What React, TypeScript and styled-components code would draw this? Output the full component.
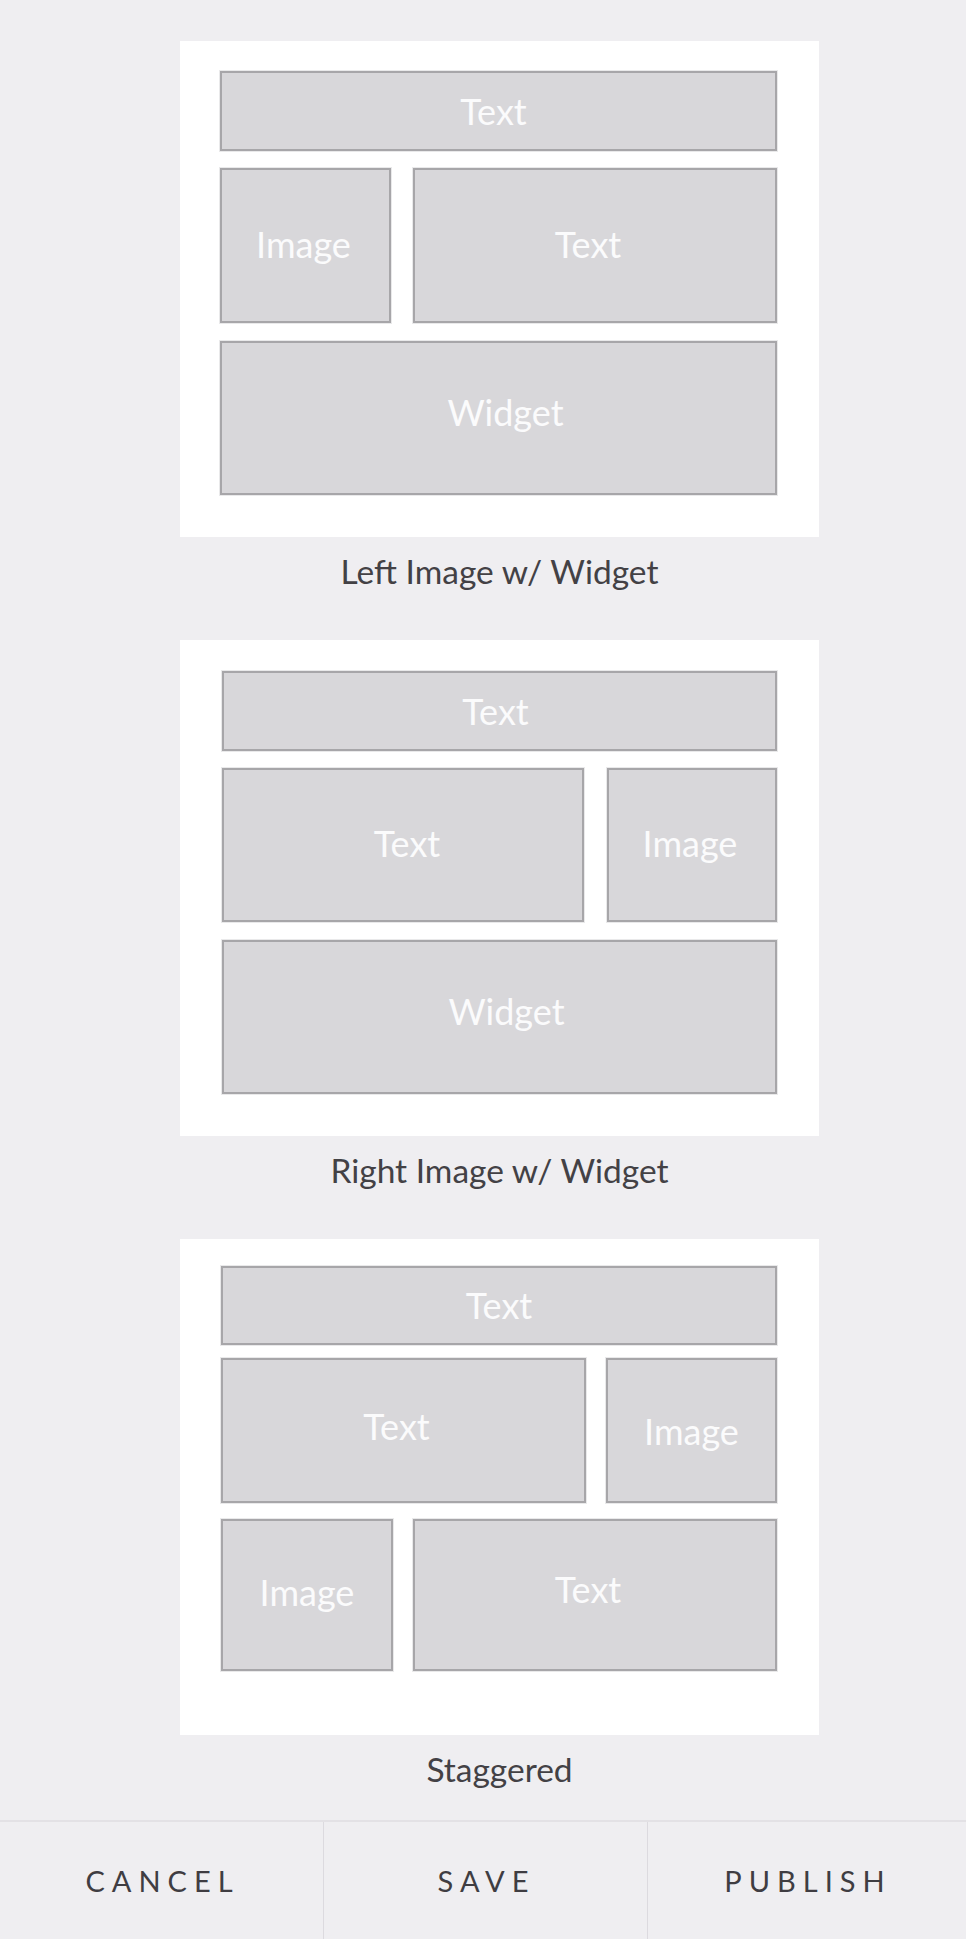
import React from "react";
import styled, { createGlobalStyle } from "styled-components";

const GlobalStyle = createGlobalStyle`
  html, body {
    margin: 0;
    padding: 0;
    background: #efeef1;
  }
  body {
    font-family: Lato, "Open Sans", "Liberation Sans", sans-serif;
    -webkit-font-smoothing: antialiased;
  }
  * { box-sizing: border-box; }
`;

const Page = styled.div`
  width: 966px;
  min-height: 1939px;
  display: flex;
  flex-direction: column;
  background: #efeef1;
`;

const List = styled.div`
  display: flex;
  flex-direction: column;
  gap: 49px;
  padding: 41px 0 31px 180px;
`;

const Option = styled.div`
  width: 639px;
  display: flex;
  flex-direction: column;
  align-items: center;
`;

const Card = styled.div<{ $pad: string; $gap: string }>`
  width: 639px;
  height: 496px;
  background: #ffffff;
  padding: ${(p) => p.$pad};
  display: flex;
  flex-direction: column;
  gap: ${(p) => p.$gap};
`;

const Row = styled.div<{ $cols: string; $h: number; $gap?: number; $mt?: number }>`
  display: grid;
  grid-template-columns: ${(p) => p.$cols};
  column-gap: ${(p) => p.$gap ?? 22}px;
  height: ${(p) => p.$h}px;
  margin-top: ${(p) => p.$mt ?? 0}px;
`;

const Block = styled.div<{ $shift?: number; $dx?: number }>`
  background: #d8d7da;
  border: 2px solid #a7a6a9;
  box-shadow: 0 0 0 1px rgba(169, 168, 171, 0.25);
  display: flex;
  align-items: center;
  justify-content: center;
  color: #fbfbfc;
  font-family: Lato, "Open Sans", "Liberation Sans", sans-serif;
  font-size: 36px;
  line-height: 1;
  padding-bottom: ${(p) => p.$shift ?? 0}px;
  padding-right: ${(p) => Math.max(0, p.$dx ?? 0)}px;
  padding-left: ${(p) => Math.max(0, -(p.$dx ?? 0))}px;
`;

const Caption = styled.div`
  margin-top: 14px;
  height: 40px;
  line-height: 40px;
  font-size: 33.5px;
  color: #434145;
  text-align: center;
  white-space: nowrap;
`;

const Footer = styled.div`
  margin-top: auto;
  height: 119px;
  border-top: 2px solid #e3e1e5;
  display: grid;
  grid-template-columns: 323px 324px 1fr;
  background: #efeef1;
`;

const FooterButton = styled.button<{ $divider?: boolean }>`
  appearance: none;
  background: transparent;
  border: none;
  border-left: ${(p) => (p.$divider ? "1px solid #dcdadf" : "none")};
  margin: 0;
  padding: 0 0 0 2px;
  font-family: Lato, "Open Sans", "Liberation Sans", sans-serif;
  font-size: 29px;
  font-weight: 400;
  letter-spacing: 7px;
  color: #3f3d42;
  display: flex;
  align-items: center;
  justify-content: center;
  cursor: pointer;
`;

export default function App() {
  return (
    <>
      <GlobalStyle />
      <Page>
        <List>
          <Option>
            <Card $pad="30px 42px 0 40px" $gap="17px">
              <Row $cols="1fr" $h={80}>
                <Block $dx={10}>Text</Block>
              </Row>
              <Row $cols="171px 1fr" $h={155}>
                <Block $shift={4} $dx={4}>Image</Block>
                <Block $shift={4} $dx={14}>Text</Block>
              </Row>
              <Row $cols="1fr" $h={154} $mt={1}>
                <Block $shift={12} $dx={-14}>Widget</Block>
              </Row>
            </Card>
            <Caption>Left Image w/ Widget</Caption>
          </Option>

          <Option>
            <Card $pad="31px 42px 0 42px" $gap="17px">
              <Row $cols="1fr" $h={80}>
                <Block $dx={8}>Text</Block>
              </Row>
              <Row $cols="1fr 170px" $h={154} $gap={23}>
                <Block $shift={4} $dx={-8}>Text</Block>
                <Block $shift={4} $dx={4}>Image</Block>
              </Row>
              <Row $cols="1fr" $h={154} $mt={1}>
                <Block $shift={12} $dx={-14}>Widget</Block>
              </Row>
            </Card>
            <Caption>Right Image w/ Widget</Caption>
          </Option>

          <Option>
            <Card $pad="27px 42px 0 41px" $gap="13px">
              <Row $cols="1fr" $h={79}>
                <Block $shift={2}>Text</Block>
              </Row>
              <Row $cols="1fr 171px" $h={145} $gap={20}>
                <Block $shift={10} $dx={14}>Text</Block>
                <Block>Image</Block>
              </Row>
              <Row $cols="172px 1fr" $h={152} $gap={20} $mt={3}>
                <Block $shift={6}>Image</Block>
                <Block $shift={12} $dx={14}>Text</Block>
              </Row>
            </Card>
            <Caption>Staggered</Caption>
          </Option>
        </List>

        <Footer>
          <FooterButton>CANCEL</FooterButton>
          <FooterButton $divider>SAVE</FooterButton>
          <FooterButton $divider>PUBLISH</FooterButton>
        </Footer>
      </Page>
    </>
  );
}
